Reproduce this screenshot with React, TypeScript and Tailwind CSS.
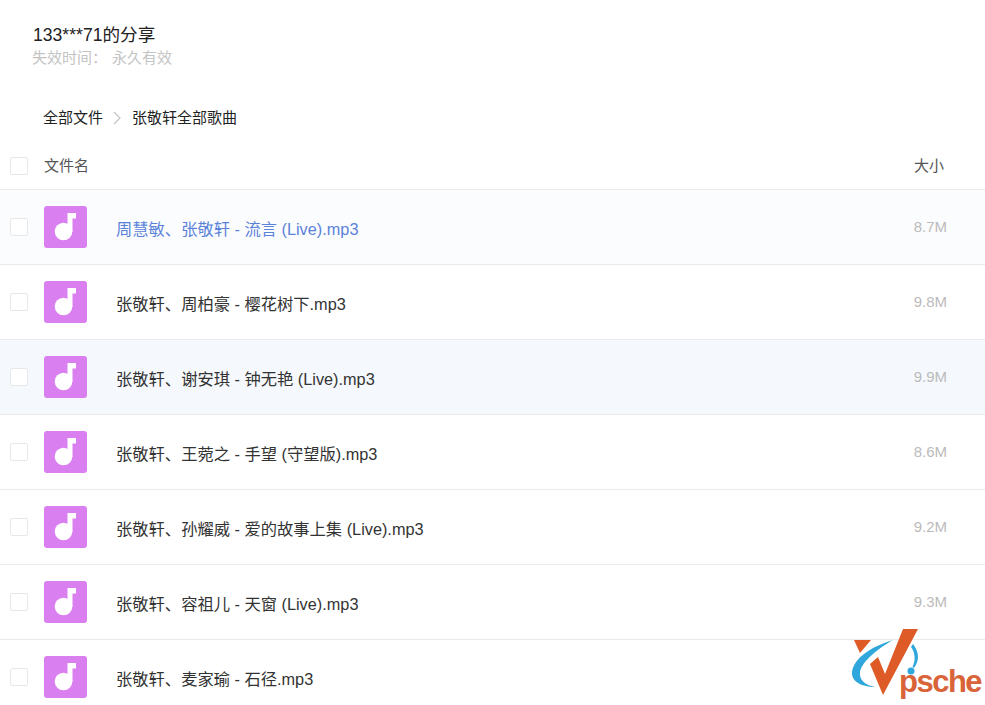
const rows = [
  { name: "周慧敏、张敬轩 - 流言 (Live).mp3", size: "8.7M", bg: "bg-[#fbfcfe]", color: "text-[#5b82d9]" },
  { name: "张敬轩、周柏豪 - 樱花树下.mp3", size: "9.8M", bg: "bg-white", color: "text-[#333333]" },
  { name: "张敬轩、谢安琪 - 钟无艳 (Live).mp3", size: "9.9M", bg: "bg-[#f5f8fc]", color: "text-[#333333]" },
  { name: "张敬轩、王菀之 - 手望 (守望版).mp3", size: "8.6M", bg: "bg-white", color: "text-[#333333]" },
  { name: "张敬轩、孙耀威 - 爱的故事上集 (Live).mp3", size: "9.2M", bg: "bg-white", color: "text-[#333333]" },
  { name: "张敬轩、容祖儿 - 天窗 (Live).mp3", size: "9.3M", bg: "bg-white", color: "text-[#333333]" },
  { name: "张敬轩、麦家瑜 - 石径.mp3", size: "", bg: "bg-white", color: "text-[#333333]" },
];

function Check() {
  return <div className="w-[18px] h-[18px] border border-[#e8e8e8] rounded-[2px] bg-white shrink-0" />;
}

function MusicIcon() {
  return (
    <div className="w-[43px] h-[42px] rounded-[3px] bg-[#da7ff0] shrink-0 flex items-center justify-center">
      <svg width="43" height="42" viewBox="0 0 43 42">
        <circle cx="19.5" cy="25.5" r="8.8" fill="#fff" />
        <path d="M23.5 26 V7 H32 V12.5 H28.5 V26 Z" fill="#fff" />
      </svg>
    </div>
  );
}

function Logo() {
  return (
    <div className="absolute left-[827px] top-[640px] w-[158px] h-[65px] bg-white">
      <svg className="absolute left-0 top-[-12px]" width="158" height="77" viewBox="0 0 158 77">
        <path d="M27 12 H44 L33 25 Z" fill="#de5a26" />
        <path d="M66 12 C46 18 27 29 25 44 C24 54 36 59 48 59 C38 57 32 52 33 44 C35 33 52 20 66 12 Z" fill="#2fa7dc" />
        <path d="M86 16 C92 24 93 32 87 40 L85.5 39 C89 32 88 24 84 19 Z" fill="#2fa7dc" />
        <circle cx="84" cy="43" r="3.5" fill="#2fa7dc" />
        <path d="M43 36 L51 29 L58 46 L76 1 L91 1 L56 67 Z" fill="#de5a26" />
      </svg>
      <span className="absolute left-[72px] top-[24px] text-[31px] leading-[36px] font-bold text-[#d9643a] tracking-[-1.5px] font-['Liberation_Sans',sans-serif]">psche</span>
    </div>
  );
}

export default function App() {
  return (
    <div className="relative w-[985px] h-[705px] overflow-hidden bg-white font-['Liberation_Sans','Noto_Sans_CJK_SC',sans-serif]">
      <div className="pl-[33px] pt-[23px]">
        <div className="text-[17.6px] leading-[24px] text-[#222222]">133***71的分享</div>
        <div className="flex text-[15px] leading-[20px] text-[#c4c4c4] mt-[1px] -ml-[1px]">
          <span className="w-[80px]">失效时间：</span>
          <span>永久有效</span>
        </div>
      </div>
      <div className="flex items-center pl-[43px] mt-[40px] h-[20px] text-[15px] text-[#222222]">
        <span>全部文件</span>
        <svg className="ml-[9px] mr-[10px]" width="10" height="14" viewBox="0 0 10 14" fill="none" stroke="#c4c4c4" strokeWidth="1.2">
          <path d="M2 1 L8 7 L2 13" />
        </svg>
        <span>张敬轩全部歌曲</span>
      </div>
      <div className="flex items-center h-[62px] pt-[15px] pl-[10px] border-b border-[#eaeaea] text-[15px] text-[#555555]">
        <Check />
        <span className="ml-[16px]">文件名</span>
        <span className="ml-auto mr-[41px]">大小</span>
      </div>
      {rows.map((r) => (
        <div key={r.name} className={`flex items-center h-[75px] pl-[10px] border-b border-[#eaeaea] ${r.bg}`}>
          <Check />
          <div className="ml-[16px]"><MusicIcon /></div>
          <span className={`ml-[29px] mt-[4px] text-[16.3px] ${r.color}`}>{r.name}</span>
          <span className="ml-auto mr-[38px] text-[15px] text-[#bbbbbb]">{r.size}</span>
        </div>
      ))}
      <Logo />
    </div>
  );
}
